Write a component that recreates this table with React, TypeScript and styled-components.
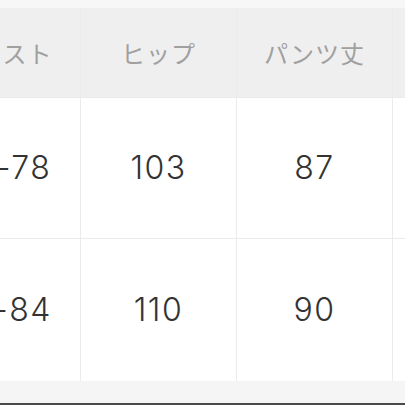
import React from "react";
import styled, { createGlobalStyle } from "styled-components";

const Global = createGlobalStyle`
  html, body { margin: 0; padding: 0; background: #f6f6f6; }
  body { font-family: "Noto Sans CJK JP", "Noto Sans", sans-serif; }
`;

const Page = styled.div`
  width: 405px;
  height: 405px;
  overflow: hidden;
  background: #f7f7f7;
  padding-top: 8px;
  box-sizing: border-box;
  display: flex;
  flex-direction: column;
`;

const Table = styled.div`
  margin-left: -75px;
  display: grid;
  grid-template-columns: repeat(4, 155px);
  grid-template-rows: 89px 140px 142px;
  column-gap: 1px;
  row-gap: 1px;
  background: #ebebeb;
  width: max-content;
`;

const HeadCell = styled.div`
  background: #efefef;
  display: flex;
  align-items: center;
  justify-content: center;
  color: #a0a0a0;
  font-size: 24px;
  letter-spacing: 1px;
`;

const Cell = styled.div`
  background: #ffffff;
  display: flex;
  align-items: center;
  justify-content: center;
  padding-bottom: 2px;
  box-sizing: border-box;
  color: #333333;
  font-family: Inter, "Noto Sans", sans-serif;
  font-size: 32px;
  font-weight: 350;
  letter-spacing: 1.5px;
`;

const Footer = styled.div`
  flex: 1;
  background: #f5f5f5;
  border-bottom: 2px solid #4a4a4a;
`;

const headers = ["ウエスト", "ヒップ", "パンツ丈", ""];
const rows = [
  ["64-78", "103", "87", ""],
  ["70-84", "110", "90", ""],
];

export default function App() {
  return (
    <>
      <Global />
      <Page>
        <Table>
          {headers.map((h, i) => (
            <HeadCell key={i}>{h}</HeadCell>
          ))}
          {rows.map((r, i) =>
            r.map((v, j) => <Cell key={`${i}-${j}`}>{v}</Cell>)
          )}
        </Table>
        <Footer />
      </Page>
    </>
  );
}
